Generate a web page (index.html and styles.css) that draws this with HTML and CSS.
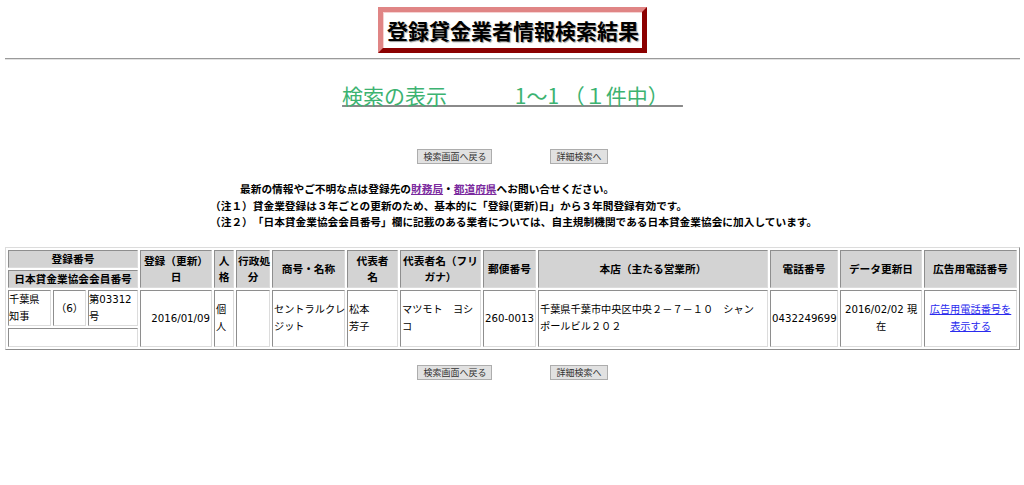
FILE: index.html
```html
<!DOCTYPE html>
<html lang="ja">
<head>
<meta charset="utf-8">
<title>登録貸金業者情報検索結果</title>
<link rel="stylesheet" href="styles.css">
</head>
<body>
<div class="page">
  <div class="title-wrap"><h1 class="title">登録貸金業者情報検索結果</h1></div>
  <hr class="rule">
  <h2 class="count"><span class="count-text">検索の表示　　　 1～1 （１件中）   </span></h2>

  <div class="btns">
    <button class="btn" type="button">検索画面へ戻る</button>
    <button class="btn wide" type="button">詳細検索へ</button>
  </div>

  <div class="notes">
    <p class="note first">最新の情報やご不明な点は登録先の<a href="#" class="vlink">財務局</a>・<a href="#" class="vlink">都道府県</a>へお問い合せください。</p>
    <p class="note">（注１）貸金業登録は３年ごとの更新のため、基本的に「登録(更新)日」から３年間登録有効です。</p>
    <p class="note">（注２）「日本貸金業協会会員番号」欄に記載のある業者については、自主規制機関である日本貸金業協会に加入しています。</p>
  </div>

  <table class="result">
    <colgroup>
      <col class="w1"><col class="w2"><col class="w3"><col class="w4"><col class="w5"><col class="w6">
      <col class="w7"><col class="w8"><col class="w9"><col class="w10"><col class="w11"><col class="w12">
    </colgroup>
    <thead>
      <tr>
        <th class="one">登録番号</th>
        <th rowspan="2">登録（更新）<br>日</th>
        <th rowspan="2">人<br>格</th>
        <th rowspan="2">行政処<br>分</th>
        <th rowspan="2">商号・名称</th>
        <th rowspan="2">代表者<br>名</th>
        <th rowspan="2">代表者名（フリ<br>ガナ）</th>
        <th rowspan="2">郵便番号</th>
        <th rowspan="2">本店（主たる営業所）</th>
        <th rowspan="2">電話番号</th>
        <th rowspan="2">データ更新日</th>
        <th rowspan="2">広告用電話番号</th>
      </tr>
      <tr>
        <th class="one">日本貸金業協会会員番号</th>
      </tr>
    </thead>
    <tbody>
      <tr>
        <td class="nest">
          <table class="inner">
            <colgroup><col class="n1"><col class="n2"><col class="n3"></colgroup>
            <tr>
              <td>千葉県<br>知事</td>
              <td class="c cjk"><span class="paren">（</span>6<span class="paren">）</span></td>
              <td>第03312<br>号</td>
            </tr>
            <tr>
              <td colspan="3" class="blank">&nbsp;</td>
            </tr>
          </table>
        </td>
        <td class="r">2016/01/09</td>
        <td>個<br>人</td>
        <td></td>
        <td>セントラルクレ<br>ジット</td>
        <td>松本<br>芳子</td>
        <td>マツモト　ヨシ<br>コ</td>
        <td class="c">260-0013</td>
        <td>千葉県千葉市中央区中央２－７－１０　シャン<br>ポールビル２０２</td>
        <td class="c">0432249699</td>
        <td class="c">2016/02/02 現<br>在</td>
        <td class="c"><a href="#" class="blink">広告用電話番号を<br>表示する</a></td>
      </tr>
    </tbody>
  </table>

  <div class="btns bottom">
    <button class="btn" type="button">検索画面へ戻る</button>
    <button class="btn wide" type="button">詳細検索へ</button>
  </div>
</div>
</body>
</html>
```

FILE: styles.css
```css
html, body {
  margin: 0;
  padding: 0;
  background: #ffffff;
}

body {
  font-family: "Noto Sans CJK JP", sans-serif;
  color: #000000;
  text-spacing-trim: space-all;
}

.page {
  padding: 7px 4px 0 5px;
}

.title-wrap {
  text-align: center;
}

.title {
  display: inline-block;
  margin: 0;
  padding: 0 3px 0 4px;
  border: 5px solid;
  border-color: #e08585 #8b0000 #8b0000 #e08585;
  box-shadow: inset 1px 1px 0 #f6d2d2;
  font-size: 21px;
  font-weight: bold;
  line-height: 36px;
  color: #000000;
  text-shadow: 1px 1px 1px #9a9a9a;
}

.rule {
  margin: 5px 0 0;
  height: 0;
  border: 0;
  border-top: 1px solid #9a9a9a;
  border-bottom: 1px solid #e2e2e2;
}

.count {
  margin: 21px 0 0;
  text-align: center;
  font-size: 21px;
  font-weight: normal;
  line-height: 28px;
}

.count-text {
  color: #3cb371;
  text-decoration: underline;
  text-decoration-color: #8a8a8a;
  text-underline-offset: 1px;
  white-space: pre;
}

.btns {
  display: flex;
  justify-content: center;
  gap: 58px;
  margin-top: 40px;
}

.btns.bottom {
  margin-top: 15px;
}

.btn {
  margin: 0;
  height: 15px;
  padding: 0 4px 0 5px;
  border: 1px solid #adadad;
  background: #e1e1e1;
  font-family: "Noto Sans CJK JP", sans-serif;
  font-size: 9px;
  line-height: 13px;
  color: #333333;
}

.btn.wide {
  padding: 0 5px 0 6px;
}

.notes {
  margin-top: 17px;
  padding-left: 205px;
}

.note {
  margin: 0;
  font-size: 10.7px;
  font-weight: bold;
  line-height: 16.6px;
  white-space: nowrap;
}

.note.first {
  padding-left: 30px;
}

.vlink {
  color: #7b2a9e;
}

.result {
  margin-top: 16px;
  width: 1015px;
  table-layout: fixed;
  border-collapse: separate;
  border-spacing: 2px;
  border: 1px solid;
  border-color: #dcdcdc #8e8e8e #8e8e8e #dcdcdc;
}

.w1 { width: 130px; }
.w2 { width: 72px; }
.w3 { width: 20px; }
.w4 { width: 34px; }
.w5 { width: 73px; }
.w6 { width: 51px; }
.w7 { width: 81px; }
.w8 { width: 53px; }
.w9 { width: 230px; }
.w10 { width: 68px; }
.w11 { width: 82px; }
.w12 { width: 93px; }

.result th,
.result td {
  border: 1px solid;
  border-color: #8e8e8e #dcdcdc #dcdcdc #8e8e8e;
  white-space: nowrap;
  overflow: visible;
}

.result th {
  background: #d3d3d3;
  padding: 0 1px;
  font-size: 10.7px;
  font-weight: bold;
  line-height: 16px;
  text-align: center;
  vertical-align: middle;
}

.result td {
  background: #ffffff;
  padding: 0 1px;
  font-family: "DejaVu Sans", "Noto Sans CJK JP", sans-serif;
  font-size: 10.2px;
  line-height: 17px;
  text-align: left;
  vertical-align: middle;
}

.result td.c { text-align: center; }
.result td.r { text-align: right; }

.result td.cjk {
  font-size: 10.5px;
}

.paren {
  display: inline-block;
  width: 10.5px;
  text-align: center;
  font-family: "Noto Sans CJK JP", sans-serif;
}

.result td.nest {
  padding: 0;
  border: 0;
  background: transparent;
}

.inner {
  width: calc(100% + 4px);
  margin: -2px;
  table-layout: fixed;
  border-collapse: separate;
  border-spacing: 2px;
}

.n1 { width: 43px; }
.n2 { width: 33px; }
.n3 { width: 50px; }

.result .inner td {
  padding: 0;
}

.blink {
  color: #2a2aee;
}
```
